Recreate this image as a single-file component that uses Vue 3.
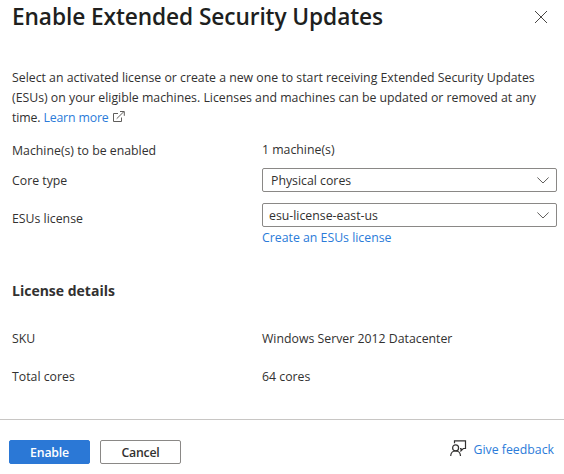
<script setup>
const details = [
  { label: 'SKU', value: 'Windows Server 2012 Datacenter' },
  { label: 'Total cores', value: '64 cores' }
]
</script>

<template>
  <main class="panel">
    <header class="header">
      <h1>Enable Extended Security Updates</h1>
      <button class="close" aria-label="Close">
        <svg width="14" height="14" viewBox="0 0 14 14"><path d="M1 1L13 13M13 1L1 13" /></svg>
      </button>
    </header>

    <p class="intro">
      <span>Select an activated license or create a new one to start receiving Extended Security Updates</span><br />
      <span>(ESUs) on your eligible machines. Licenses and machines can be updated or removed at any</span><br />
      <span class="last">time. <a>Learn more</a></span>
      <svg class="external" width="12" height="12" viewBox="0 0 12 12"><path d="M5 2.5H.5V10.5H8.5V6.5M3.7 7.7L11 .5M7 .5H11.3V4.8" /></svg>
    </p>

    <section class="form">
      <div class="row machines">
        <span class="label">Machine(s) to be enabled</span>
        <span class="value">1 machine(s)</span>
      </div>
      <div class="row core">
        <span class="label">Core type</span>
        <div class="select first">
          <span>Physical cores</span>
          <svg width="12" height="7" viewBox="0 0 12 7"><path d="M.4 .5L6 6L11.6 .5" /></svg>
        </div>
      </div>
      <div class="row license">
        <span class="label">ESUs license</span>
        <div class="select">
          <span>esu-license-east-us</span>
          <svg width="12" height="7" viewBox="0 0 12 7"><path d="M.4 .5L6 6L11.6 .5" /></svg>
        </div>
      </div>
      <a class="create">Create an ESUs license</a>
    </section>

    <section class="details">
      <h2>License details</h2>
      <div v-for="item in details" :key="item.label" class="row detail">
        <span class="label">{{ item.label }}</span>
        <span class="value">{{ item.value }}</span>
      </div>
    </section>

    <footer class="footer">
      <button class="btn primary">Enable</button>
      <button class="btn">Cancel</button>
      <a class="feedback">
        <svg width="17" height="17" viewBox="0 0 17 17"><circle cx="5.6" cy="7.9" r="3" /><path d="M.7 16C.8 12.8 2.8 11 5.6 11S10.4 12.8 10.5 16M4.5 3.2V.8H15.5V8.5H13.3L11 10.8V8.5H10" /></svg>
        <span>Give feedback</span>
      </a>
    </footer>
  </main>
</template>

<style>
body {
  margin: 0;
  background: #fff;
}
</style>

<style scoped>
.panel {
  box-sizing: border-box;
  width: 564px;
  height: 474px;
  display: flex;
  flex-direction: column;
  overflow: hidden;
  background: #fff;
  color: #323130;
  font: 12.3px/20px "Open Sans", "Noto Sans", sans-serif;
  white-space: nowrap;
}
svg {
  fill: none;
  stroke: #605e5c;
  stroke-width: 1;
  flex: none;
}
a {
  color: #2b7bd9;
}
.header {
  height: 68px;
  box-sizing: border-box;
  padding: 0 16px 0 12px;
  display: flex;
  justify-content: space-between;
  align-items: flex-start;
}
h1 {
  margin: 1px 0 0;
  font-size: 22.7px;
  line-height: 32px;
  font-weight: 600;
  letter-spacing: -0.1px;
  color: #201f1e;
}
.close {
  display: flex;
  padding: 0;
  margin-top: 10px;
  border: 0;
  background: none;
}
.close svg {
  stroke: #484644;
}
.intro {
  margin: 0 0 0 12px;
  height: 73px;
}
.last {
  letter-spacing: -0.14px;
}
.external {
  margin-left: 4px;
  vertical-align: -1px;
}
.row {
  display: grid;
  grid-template-columns: 250px 295px;
  padding-left: 12px;
}
.machines {
  height: 27px;
}
.machines .value {
  margin-top: -1px;
}
.core {
  height: 35px;
}
.core .label {
  margin-top: 3px;
}
.license .label {
  margin-top: 6px;
}
.select {
  box-sizing: border-box;
  height: 24px;
  border: 1px solid #8a8886;
  border-radius: 2px;
  padding: 1px 7px 0 6px;
  display: flex;
  align-items: center;
  justify-content: space-between;
}
.select span {
  padding-top: 1px;
}
.select.first {
  padding-left: 8px;
}
.create {
  display: block;
  height: 20px;
  margin-left: 262px;
  margin-top: -1px;
}
.details {
  margin-top: 33px;
}
h2 {
  margin: 0 0 28px 12px;
  font-size: 14px;
  line-height: 20px;
  font-weight: 700;
}
.detail {
  height: 38px;
}
.footer {
  margin-top: auto;
  height: 55px;
  box-sizing: border-box;
  border-top: 1px solid #c8c6c4;
  padding: 20px 10px 0 9px;
  display: flex;
  align-items: flex-start;
}
.btn {
  box-sizing: border-box;
  width: 81px;
  height: 24px;
  margin-right: 10px;
  padding: 1px 0 0;
  border: 1px solid #8a8886;
  border-radius: 2px;
  background: #fff;
  color: #323130;
  font: 600 12.3px/20px "Open Sans", sans-serif;
  letter-spacing: -0.2px;
}
.btn.primary {
  background: #2b78d6;
  border-color: #2b78d6;
  color: #fff;
}
.feedback {
  margin-left: auto;
  display: flex;
  gap: 7px;
}
.feedback svg {
  stroke: #323130;
  stroke-width: 1.2;
}
</style>
